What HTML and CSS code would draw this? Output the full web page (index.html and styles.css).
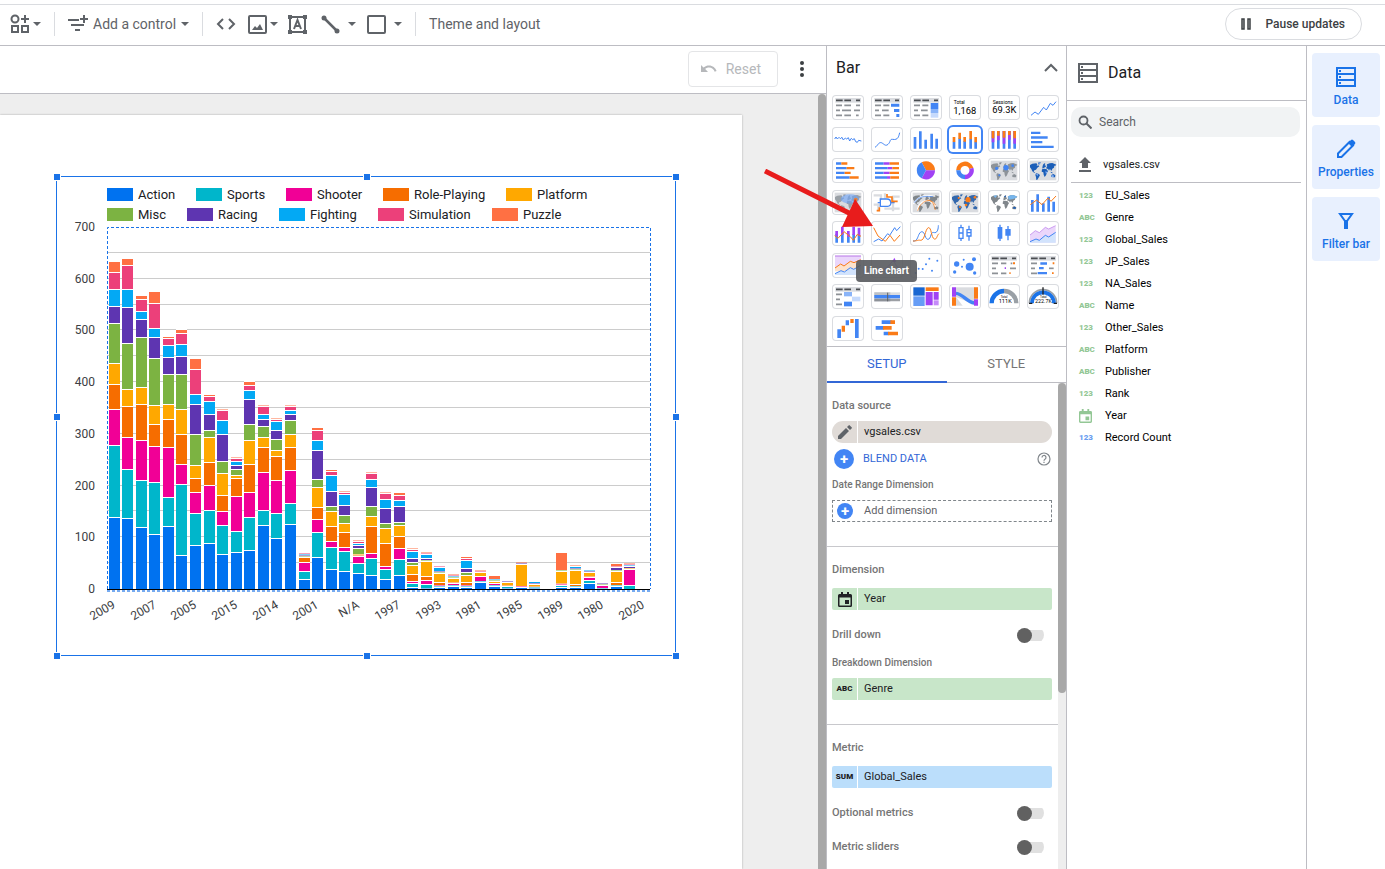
FILE: index.html
```html
<!DOCTYPE html>
<html lang="en">
<head>
	<meta charset="UTF-8">
	<title>Report editor</title>
	<link rel="stylesheet" href="styles.css">
</head>
<body>
<svg class="defs" width="0" height="0" aria-hidden="true">
	<symbol id="world" viewBox="0 0 96 75">
		<path d="M9 21l7-4 12-1 3 3-2 5 5-2 3 3-6 4-4 6-5 2-2 4 5 3-3 1-6-5-3-7-4-5zM33 14l8-2-2 6-4 2zM27 46l7 1 5 4-3 6-5 8-3 1-1-9-2-6z"/>
		<path d="M48 20l4-4 3 1-2 5 4 1-1 4-5 2-4 3-1-4zM45 34l7-2 7 2 4 6-3 4-3 8-4 5-3-7-1-7-5-2zM60 19l8-3 8-1 12 5-3 3-3 0-1 6-5 3-2 6-3-1-2-5-3 6-3-6-4 1-1-5 3-4-2-2zM70 41l5 2 3 3-5-1zM73 51l6-3 6 4-1 6-5 0-6-1z"/>
	</symbol>
	<symbol id="server" viewBox="0 0 20 20">
		<path fill="none" stroke="currentColor" stroke-width="2" d="M1 1h18v18H1zM1 7h18M1 13h18"/>
		<path fill="currentColor" d="M3 3h2v2H3zM3 9h2v2H3zM3 15h2v2H3z"/>
	</symbol>
	<symbol id="calendar" viewBox="0 0 14 15">
		<path fill="currentColor" d="M3 0h2v2h4V0h2v2h1.500a1.500 1.500 0 0 1 1.500 1.500v10A1.500 1.500 0 0 1 12.500 15h-11A1.500 1.500 0 0 1 0 13.500v-10A1.500 1.500 0 0 1 1.500 2H3zM1.500 5.500v8h11v-8zM7 8h4v4H7z" fill-rule="evenodd"/>
	</symbol>
	<symbol id="tbl" viewBox="0 0 96 75">
		<path fill="#dadce0" d="M10 9h77v14H10z"/>
		<path stroke="#4a4d51" stroke-width="5" d="M12 16h20M37 16h20M72 16h12"/>
		<path stroke="#8d9196" stroke-width="5" d="M12 31h18M12 46h12M12 61h18"/>
	</symbol>
</svg>

<div class="app">
	<header class="toolbar">
		<button class="tool" aria-label="Community visualizations"><svg width="20" height="20" viewBox="0 0 20 20"><g fill="none" stroke="currentColor" stroke-width="2"><circle cx="5" cy="5" r="3.500"/><path d="M15 1v8M11 5h8M2 12h6v6H2zM12 12h6v6h-6z"/></g></svg><i class="caret"></i></button>
		<span class="sep"></span>
		<button class="tool control"><svg width="20" height="18" viewBox="0 0 20 18"><path fill="none" stroke="currentColor" stroke-width="2" d="M0 5h11M3 10h13M7 15h5M16 0v8M12 4h8"/></svg><span>Add a control</span><i class="caret"></i></button>
		<span class="sep"></span>
		<button class="tool code" aria-label="Embed"><svg width="20" height="14" viewBox="0 0 20 14"><path fill="none" stroke="currentColor" stroke-width="2" d="M7 2L2 7l5 5M13 2l5 5-5 5"/></svg></button>
		<button class="tool image" aria-label="Image"><svg width="19" height="19" viewBox="0 0 19 19"><rect x="1" y="1" width="17" height="17" rx="1" fill="none" stroke="currentColor" stroke-width="2"/><path fill="currentColor" d="M4 15l3-4 2 2 3-4 3 6z"/></svg><i class="caret"></i></button>
		<button class="tool text" aria-label="Text"><svg width="19" height="19" viewBox="0 0 19 19"><path fill="none" stroke="currentColor" stroke-width="2" d="M2 2h15v15H2zM6 14l3.500-9L13 14M7 11h5"/><path fill="currentColor" d="M0 0h4v4H0zM15 0h4v4h-4zM0 15h4v4H0zM15 15h4v4h-4z"/></svg></button>
		<button class="tool line" aria-label="Line"><svg width="19" height="19" viewBox="0 0 19 19"><path stroke="currentColor" stroke-width="2.500" d="M3 3l13 13"/><circle cx="3" cy="3" r="2.500" fill="currentColor"/><circle cx="16" cy="16" r="2.500" fill="currentColor"/></svg><i class="caret"></i></button>
		<button class="tool shape" aria-label="Shape"><svg width="19" height="19" viewBox="0 0 19 19"><rect x="1" y="1" width="17" height="17" rx="1" fill="none" stroke="currentColor" stroke-width="2"/></svg><i class="caret"></i></button>
		<span class="sep"></span>
		<button class="tool theme">Theme and layout</button>
		<button class="pause"><svg width="10" height="12" viewBox="0 0 10 12"><path fill="#dadce0" stroke="currentColor" stroke-width="1.500" d="M1 1h2v10H1zM7 1h2v10H7z"/></svg>Pause updates</button>
	</header>

	<div class="main">
		<main class="report">
			<div class="reportBar">
				<button class="reset" disabled><svg width="16" height="8" viewBox="0 0 16 8"><path fill="currentColor" d="M0 0l2.500 2.500C4.200 1 6 .4 8 .4c3.600 0 6.500 2.300 7.600 5.600l-1.900.7C12.900 4.300 10.700 2.500 8 2.500c-1.500 0-2.800.5-3.800 1.500L7 7H0z"/></svg>Reset</button>
				<button class="more" aria-label="More options"><svg width="4" height="16" viewBox="0 0 4 16"><g fill="currentColor"><circle cx="2" cy="2" r="2"/><circle cx="2" cy="8" r="2"/><circle cx="2" cy="14" r="2"/></g></svg></button>
			</div>
			<div class="canvas">
				<div class="sheet">
					<svg id="chart" class="chart" width="630" height="490" viewBox="0 0 630 490" role="img" aria-label="Global sales by year and genre"></svg>
				</div>
				<div class="vbar"></div>
			</div>
		</main>

		<aside class="setup">
			<div class="chartHead">
				<h2>Bar</h2>
				<button aria-label="Collapse"><svg width="14" height="9" viewBox="0 0 14 9"><path fill="none" stroke="currentColor" stroke-width="2" d="M1 8l6-6 6 6"/></svg></button>
			</div>
			<div class="picker">
				<button><svg viewBox="0 0 96 75"><use href="#tbl"/><path class="gr" d="M37 31h20M30 46h27M37 61h20M72 31h12M66 46h18M72 61h8"/></svg></button>
				<button><svg viewBox="0 0 96 75"><use href="#tbl"/><path class="gr" d="M37 31h18M33 46h20M37 61h18"/><path class="b" d="M60 26h25v9H60zM69 42h16v9H69zM76 57h9v9h-9z"/></svg></button>
				<button><svg viewBox="0 0 96 75"><use href="#tbl"/><path class="gr" d="M37 31h18M33 46h20M37 61h18"/><path class="b" d="M62 24h23v18H62z"/><path fill="#8ab4f8" d="M62 42h23v12H62z"/><path fill="#c6dafc" d="M62 54h23v14H62z"/></svg></button>
				<button><svg viewBox="0 0 96 75"><text x="14" y="27" font-size="15">Total</text><text x="13" y="56" font-size="28">1,168</text></svg></button>
				<button><svg viewBox="0 0 96 75"><text x="14" y="26" font-size="15">Sessions</text><text x="13" y="53" font-size="28">69.3K</text></svg></button>
				<button><svg viewBox="0 0 96 75"><path class="lb" d="M12 61l12-10 10 7 16-21 8 8 12-20 8 6 9-11"/></svg></button>

				<button><svg viewBox="0 0 96 75"><path class="lb" d="M8 36l4-6 4 6 5-5 4 4 5-4 4 8 6-6 4 3 5-4 4 10 5-8 4 4 5-3 4 9 5 2 4-6 8 2"/></svg></button>
				<button><svg viewBox="0 0 96 75"><path class="lb" d="M12 61c8-4 10-16 19-14 9 4 12 12 20 5 9-8 4-16 14-15 16 3 18-8 21-20"/></svg></button>
				<button><svg viewBox="0 0 96 75"><path class="b" d="M11 30h8v35h-8zM27 13h8v52h-8zM43 38h8v27h-8zM61 20h8v45h-8zM76 35h8v30h-8z"/></svg></button>
				<button class="active"><svg viewBox="0 0 96 75"><path class="b" d="M11 44h8v21h-8zM28 34h8v31h-8zM43 42h8v23h-8zM61 35h8v30h-8zM76 44h8v21h-8z"/><path class="o" d="M11 30h8v15h-8zM28 17h8v19h-8zM43 30h8v14h-8zM61 12h8v25h-8zM76 30h8v16h-8z"/></svg></button>
				<button><svg viewBox="0 0 96 75"><path class="b" d="M11 12h8v53h-8zM27 12h8v53h-8zM44 12h8v53h-8zM60 12h8v53h-8zM76 12h8v53h-8z"/><path class="p" d="M11 12h8v34h-8zM27 12h8v28h-8zM44 12h8v38h-8zM60 12h8v26h-8zM76 12h8v38h-8z"/><path class="o" d="M11 12h8v22h-8zM27 12h8v14h-8zM44 12h8v20h-8zM60 12h8v12h-8zM76 12h8v22h-8z"/></svg></button>
				<button><svg viewBox="0 0 96 75"><path class="b" d="M12 14h28v7H12zM12 28h50v7H12zM12 42h34v7H12zM12 56h68v7H12z"/></svg></button>

				<button><svg viewBox="0 0 96 75"><path class="b" d="M12 13h16v7H12zM12 27h32v7H12zM12 41h26v7H12zM12 55h41v7H12z"/><path class="o" d="M28 13h18v7H28zM44 27h23v7H44zM38 41h18v7H38zM53 55h27v7H53z"/></svg></button>
				<button><svg viewBox="0 0 96 75"><path class="b" d="M12 13h26v7H12zM12 27h38v7H12zM12 41h26v7H12zM12 55h36v7H12z"/><path class="p" d="M38 13h18v7H38zM50 27h14v7H50zM38 41h18v7H38zM48 55h10v7H48z"/><path class="o" d="M56 13h28v7H56zM64 27h20v7H64zM56 41h28v7H56zM58 55h26v7H58z"/></svg></button>
				<button><svg viewBox="0 0 96 75"><path class="o" d="M48 37L35 13a27 27 0 0 1 40 24z"/><path class="p" d="M48 37h27a27 27 0 0 1-40 24z"/><path class="b" d="M48 37L35 61a27 27 0 0 1 0-48z"/></svg></button>
				<button><svg viewBox="0 0 96 75"><g fill="none" stroke-width="13"><path stroke="#fa7b17" d="M28 37a20 20 0 0 1 39-6"/><path stroke="#a142f4" d="M67 31a20 20 0 0 1-19 26"/><path stroke="#4285f4" d="M48 57a20 20 0 0 1-20-20"/></g></svg></button>
				<button><svg viewBox="0 0 96 75"><path class="bg" d="M8 8h80v59H8z"/><use href="#world" fill="#8d9399"/><g class="b"><circle cx="54" cy="29" r="8"/><circle cx="26" cy="31" r="5"/><circle cx="74" cy="23" r="4"/><circle cx="34" cy="52" r="3"/></g></svg></button>
				<button><svg viewBox="0 0 96 75"><path class="bg" d="M8 8h80v59H8z"/><use href="#world" fill="#1b5eb8"/><path fill="#8ab4f8" d="M34 16l6-3-2 5zM55 40l6 2-4 6zM74 52h6v5h-6zM27 48l7 1-3 5z"/></svg></button>

				<button><svg viewBox="0 0 96 75"><path class="bg" d="M8 8h80v59H8z"/><use href="#world" fill="#9aa0a6"/><ellipse cx="54" cy="27" rx="28" ry="14" fill="#6da3f8" opacity=".6"/><circle cx="71" cy="29" r="6" class="o" opacity=".8"/></svg></button>
				<button><svg viewBox="0 0 96 75"><path fill="none" stroke="#dadce0" stroke-width="7" d="M8 16h22v14M8 44h14v20M42 10v16M86 20H66v44M86 56H40"/><path fill="none" stroke="#4285f4" stroke-width="4" d="M28 27h20c14 0 16 22 2 22H28zM20 38h8M61 38h10"/><path fill="none" stroke="#fa7b17" stroke-width="5" d="M48 12v9h15v13h17M17 62h8V52"/></svg></button>
				<button><svg viewBox="0 0 96 75"><path class="bg" d="M8 8h80v59H8z"/><use href="#world" fill="#80868b"/><path fill="none" stroke="#fff" stroke-width="4" d="M10 42C30 12 50 16 76 18M22 62c4-30 36-42 56-12"/><path fill="none" stroke="#fa7b17" stroke-width="2" d="M23 62c10-30 38-42 54-16M52 30c20 2 20 20 24 30"/><path fill="none" stroke="#4285f4" stroke-width="2" d="M13 38c12-20 30-20 56-18"/></svg></button>
				<button><svg viewBox="0 0 96 75"><path class="bg" d="M8 8h80v59H8z"/><use href="#world" fill="#3368ad"/><g class="o"><circle cx="57" cy="29" r="8"/><circle cx="29" cy="24" r="3"/><circle cx="78" cy="22" r="4"/><circle cx="51" cy="45" r="4"/><circle cx="33" cy="51" r="3"/></g></svg></button>
				<button><svg viewBox="0 0 96 75"><use href="#world" fill="#80868b"/><path fill="#76b5ec" d="M60 19l8-3 8-1 12 5-3 3-9 4-14 2zM16 17l12-1-6 8z"/><path fill="#1b5eb8" d="M76 51h7v5h-7zM48 20l4-4 2 6z"/></svg></button>
				<button><svg viewBox="0 0 96 75"><path class="b" d="M12 30h8v35h-8zM28 13h8v52h-8zM45 40h8v25h-8zM61 20h8v45h-8zM76 35h8v30h-8z"/><path class="lo" d="M10 44l19-14 16 14 18-20 9 10 15-16"/></svg></button>

				<button><svg viewBox="0 0 96 75"><path class="b" d="M10 38h8v27h-8zM27 36h8v29h-8zM45 40h8v25h-8zM61 40h8v25h-8zM77 42h8v23h-8z"/><path class="p" d="M10 30h8v16h-8zM27 17h8v24h-8zM45 30h8v18h-8zM61 17h8v25h-8zM77 20h8v24h-8z"/><path class="lo" d="M8 44l10 8 18-20 20 16 8 10 12-18 11 6"/></svg></button>
				<button><svg viewBox="0 0 96 75"><path class="lb" d="M8 62l15-8 10 6 17-22 6 5 15-23 6 9 11-12"/><path class="lo" d="M8 20l13 25 22 16 14-18 13 18 17-19"/></svg></button>
				<button><svg viewBox="0 0 96 75"><path class="lb" d="M9 60c12 2 14-12 18-20 6-12 14-10 18 4 5 16 14 14 18-2 3-11 8-7 12-7 8-1 10-12 10-22"/><path class="lo" d="M9 60c14 0 14-4 22-2 14 2 14-34 24-38 10-2 8 30 18 34 8 2 7-10 14-16"/></svg></button>
				<button><svg viewBox="0 0 96 75"><path fill="none" stroke="#4285f4" stroke-width="4" d="M36 11v9M36 52v8M30 20h12v32H30zM30 36h12M60 14v10M60 44v15M54 26h12v19H54zM54 35h12"/></svg></button>
				<button><svg viewBox="0 0 96 75"><path class="b" d="M34 11h4v7h5v35h-5v7h-4v-7h-5V18h5zM58 15h4v9h6v20h-6v14h-4V44h-6V24h6z"/></svg></button>
				<button><svg viewBox="0 0 96 75"><path fill="#ead6fb" d="M9 42l16-13 12 6 18-16 10 5 21-10v51H9z"/><path fill="#d2e3fc" d="M9 62l18-8 10 4 18-15 10 5 21-14v31H9z"/><path fill="none" stroke="#b774e8" stroke-width="2" d="M9 42l16-13 12 6 18-16 10 5 21-10"/><path class="lb" d="M9 62l18-8 10 4 18-15 10 5 21-14"/></svg></button>

				<button><svg viewBox="0 0 96 75"><path fill="#ead6fb" d="M9 9h78v40H9z"/><path fill="#fde2cc" d="M9 45l17-12 10 6 19-14 11 4 20-9v35H9z"/><path fill="#d2e3fc" d="M9 62l18-9 10 4 18-13 10 5 21-12v29H9z"/><path fill="none" stroke="#b774e8" stroke-width="3" d="M9 9h78"/><path class="lo" d="M9 45l17-12 10 6 19-14 11 4 20-9"/><path class="lb" d="M9 62l18-9 10 4 18-13 10 5 21-12"/></svg></button>
				<button><svg viewBox="0 0 96 75"><path fill="#a142f4" d="M64 26l6-12 6 12z"/><path fill="none" stroke="#a142f4" stroke-width="2" d="M10 60l16-15 12 6 15-12 14-18 10 19 9 6"/></svg></button>
				<button><svg viewBox="0 0 96 75"><g class="b"><circle cx="26" cy="47" r="3"/><circle cx="38" cy="48" r="3"/><circle cx="48" cy="34" r="3"/><circle cx="58" cy="17" r="3"/><circle cx="66" cy="53" r="3"/><circle cx="82" cy="23" r="3"/><circle cx="17" cy="60" r="3"/></g></svg></button>
				<button><svg viewBox="0 0 96 75"><g class="b"><circle cx="23" cy="33" r="8"/><circle cx="62" cy="41" r="12"/><circle cx="75" cy="19" r="6"/><circle cx="39" cy="41" r="3"/><circle cx="17" cy="57" r="5"/><circle cx="77" cy="60" r="5"/><circle cx="44" cy="20" r="3"/></g></svg></button>
				<button><svg viewBox="0 0 96 75"><use href="#tbl"/><path class="gr" d="M39 31h16M39 61h16M68 31h5M66 46h18"/><path class="o" d="M75 28h6v6h-6zM64 58h4v5h-4z"/><path fill="#a142f4" d="M50 43h4v5h-4z"/></svg></button>
				<button><svg viewBox="0 0 96 75"><use href="#tbl"/><path class="b" d="M40 28h20v7H40zM36 42h14v7H36zM32 57h28v7H32z"/><path class="o" d="M77 28h5v6h-5zM75 58h5v5h-5z"/><path class="gr" d="M66 46h14"/></svg></button>

				<button><svg viewBox="0 0 96 75"><use href="#tbl"/><path fill="#8ab4f8" d="M36 24h24v13H36z"/><path fill="#c6dafc" d="M60 38h25v14H60z"/><path class="b" d="M36 53h24v14H36z"/></svg></button>
				<button><svg viewBox="0 0 96 75"><path fill="#dadce0" d="M10 25h77v28H10z"/><path fill="#bdc1c6" d="M10 25h48v28H10z"/><path class="b" d="M10 33h77v10H10z"/><path stroke="#5f6368" stroke-width="3" d="M10 48h77M50 26v26"/></svg></button>
				<button><svg viewBox="0 0 96 75"><path fill="#1967d2" d="M10 10h34v25H10z"/><path class="o" d="M47 10h39v11H47z"/><path fill="#669df6" d="M10 37h34v29H10z"/><path class="p" d="M47 24h21v40H47zM71 24h15v23H71z"/><path fill="#c58af9" d="M71 49h15v15H71z"/></svg></button>
				<button><svg viewBox="0 0 96 75"><path class="bg" d="M21 10h55v55H21z"/><path fill="#fff" d="M21 39l55 22v6H42z"/><path fill="none" stroke="#4285f4" stroke-width="10" d="M21 28c23 2 29 25 55 29"/><path class="p" d="M9 10h12v28H9zM75 46h12v19H75z"/><path class="o" d="M9 40h12v25H9zM75 10h12v34H75z"/></svg></button>
				<button><svg viewBox="0 0 96 75"><g fill="none" stroke-width="13"><path stroke="#1a73e8" d="M11 58a37 37 0 0 1 37-37"/><path stroke="#9aa0a6" d="M48 21a37 37 0 0 1 37 37"/></g><text x="38" y="42" font-size="9">Total</text><text x="32" y="58" font-size="17">111K</text></svg></button>
				<button><svg viewBox="0 0 96 75"><g fill="none"><path stroke="#9aa0a6" stroke-width="5" d="M7 58a41 41 0 0 1 82 0"/><path stroke="#1a73e8" stroke-width="11" d="M15 58a33 33 0 0 1 66 0"/><path stroke="#202124" stroke-width="4" d="M48 10v22M6 58h10M80 58h10"/></g><text x="39" y="43" font-size="9">Total</text><text x="24" y="58" font-size="16">222.7K</text></svg></button>

				<button><svg viewBox="0 0 96 75"><path class="b" d="M16 40h11v26H16zM41 13h10v15H41zM69 9h11v57H69z"/><path class="o" d="M29 29h10v18H29zM55 9h10v12H55z"/></svg></button>
				<button><svg viewBox="0 0 96 75"><path class="b" d="M32 13h30v11H32zM14 30h24v11H14zM38 47h15v11H38z"/><path class="o" d="M58 13h14v11H58zM36 30h26v11H36zM51 47h30v11H51z"/></svg></button>
			</div>
			<svg class="pointer" width="110" height="62" viewBox="0 0 110 62"><path stroke="#e81c1c" stroke-width="5" d="M1 2l88 44"/><path fill="#e81c1c" d="M109 57l-31 1 13-28z"/></svg>
			<div class="tip" role="tooltip">Line chart</div>

			<div class="tabs">
				<button class="active">SETUP</button>
				<button>STYLE</button>
			</div>
			<div class="props">
				<div class="sections">
					<section>
						<h3>Data source</h3>
						<button class="chip source"><span class="type"><svg width="14" height="14" viewBox="0 0 14 14"><path fill="#5f6368" d="M0 11v3h3l8-8-3-3zM9 2l3 3 1.600-1.600a.8.8 0 0 0 0-1.200L11.800.4a.8.8 0 0 0-1.200 0z"/></svg></span><span class="name">vgsales.csv</span></button>
						<div class="blend"><button class="add"><i class="plus">+</i>BLEND DATA</button><svg width="14" height="14" viewBox="0 0 14 14"><circle cx="7" cy="7" r="6" fill="none" stroke="#80868b" stroke-width="1.200"/><path fill="none" stroke="#80868b" stroke-width="1.200" d="M5 5.500a2 2 0 1 1 3 1.700q-1 .6-1 1.500M7 9.700v1.200"/></svg></div>
						<h4>Date Range Dimension</h4>
						<button class="drop"><i class="plus">+</i>Add dimension</button>
					</section>
					<section>
						<h3>Dimension</h3>
						<button class="chip dim"><span class="type"><svg width="14" height="15"><use href="#calendar"/></svg></span><span class="name">Year</span></button>
						<label class="toggle">Drill down<input type="checkbox"></label>
						<h4>Breakdown Dimension</h4>
						<button class="chip dim"><span class="type">ABC</span><span class="name">Genre</span></button>
					</section>
					<section>
						<h3>Metric</h3>
						<button class="chip metric"><span class="type">SUM</span><span class="name">Global_Sales</span></button>
						<label class="toggle">Optional metrics<input type="checkbox"></label>
						<label class="toggle">Metric sliders<input type="checkbox"></label>
					</section>
				</div>
				<div class="vbar track"><div class="thumb"></div></div>
			</div>
		</aside>

		<aside class="data">
			<div class="dataHead"><svg width="20" height="20"><use href="#server"/></svg><h2>Data</h2></div>
			<label class="search"><svg width="14" height="14" viewBox="0 0 14 14"><circle cx="5.500" cy="5.500" r="4" fill="none" stroke="currentColor" stroke-width="1.800"/><path stroke="currentColor" stroke-width="2" d="M8.500 8.500l5 5"/></svg><input type="text" placeholder="Search" aria-label="Search"></label>
			<div class="file"><svg width="12" height="15" viewBox="0 0 12 15"><path fill="#5f6368" d="M6 0l6 6H9v5H3V6H0zM0 13h12v2H0z"/></svg>vgsales.csv</div>
			<ul class="fields">
				<li><b>123</b>EU_Sales</li>
				<li><b>ABC</b>Genre</li>
				<li><b>123</b>Global_Sales</li>
				<li><b>123</b>JP_Sales</li>
				<li><b>123</b>NA_Sales</li>
				<li><b>ABC</b>Name</li>
				<li><b>123</b>Other_Sales</li>
				<li><b>ABC</b>Platform</li>
				<li><b>ABC</b>Publisher</li>
				<li><b>123</b>Rank</li>
				<li><b><svg width="13" height="14"><use href="#calendar"/></svg></b>Year</li>
				<li class="count"><b>123</b>Record Count</li>
			</ul>
		</aside>

		<nav class="rail">
			<button><svg width="20" height="20"><use href="#server"/></svg>Data</button>
			<button><svg width="20" height="20" viewBox="0 0 20 20"><path fill="none" stroke="currentColor" stroke-width="2" d="M2 18v-3.500L13.500 3l3.500 3.500L5.500 18z"/><path fill="currentColor" d="M12 4l3-3q1-.8 2 0l2 2q.8 1 0 2l-3 3z"/></svg>Properties</button>
			<button><svg width="20" height="20" viewBox="0 0 20 20"><path fill="none" stroke="currentColor" stroke-width="2" d="M4 3h12l-5 7H9z"/><path fill="currentColor" d="M8 9h4v9H8z"/></svg>Filter bar</button>
		</nav>
	</div>
</div>
<script src="chart.js"></script>
</body>
</html>
```
FILE: styles.css
```css
*{
	margin: 0;
	padding: 0;
	box-sizing: border-box;
	list-style: none;
}

body{
	font: 11px/16px Roboto, "Noto Sans", sans-serif;
	color: #202124;
	background: #fff;
}

button,
input{
	font: inherit;
	color: inherit;
	background: none;
	border: 0;
}

button{
	cursor: pointer;
}

svg{
	display: block;
	flex: none;
}

.defs{
	position: absolute;
}

.app{
	display: flex;
	flex-direction: column;
	min-height: 100vh;
	padding-top: 4px;
}

/* toolbar */
.toolbar{
	display: flex;
	align-items: center;
	height: 42px;
	padding: 0 23px 2px 10px;
	border-top: 1px solid #dadce0;
	border-bottom: 1px solid #bdbdc3;
	color: #5f6368;
}

.tool{
	display: flex;
	align-items: center;
	gap: 3px;
	font-size: 14px;
}

.caret{
	border: 4px solid transparent;
	border-top-color: #5f6368;
	border-bottom: 0;
}

.sep{
	width: 1px;
	height: 24px;
	margin: 0 13px;
	background: #dadce0;
}

.control{
	gap: 5px;
}

.image{
	margin-left: 12px;
}

.text{
	margin-left: 10px;
}

.line{
	gap: 8px;
	margin-left: 14px;
}

.shape{
	gap: 8px;
	margin-left: 11px;
}

.pause{
	display: flex;
	align-items: center;
	gap: 14px;
	height: 32px;
	margin-left: auto;
	padding: 0 16px 0 15px;
	border: 1px solid #dadce0;
	border-radius: 16px;
	font-size: 12px;
	font-weight: 500;
	color: #3c4043;
}

.main{
	display: flex;
	flex: 1;
}

/* report */
.report{
	display: flex;
	flex: 1;
	flex-direction: column;
	min-width: 0;
}

.reportBar{
	display: flex;
	align-items: center;
	justify-content: flex-end;
	gap: 14px;
	height: 48px;
	padding: 0 14px 2px 0;
	border-bottom: 1px solid #bdbdc3;
}

.reset{
	display: flex;
	align-items: center;
	gap: 9px;
	height: 36px;
	padding: 0 16px 0 12px;
	border: 1px solid #e4e5e7;
	border-radius: 4px;
	font-size: 14px;
	color: #b6b8bb;
}

.more{
	padding: 8px;
	color: #3c4043;
}

.canvas{
	display: flex;
	flex: 1;
	background: #eee;
}

.sheet{
	flex: 1;
	margin: 21px 76px 0 0;
	padding: 57px 0 0 52px;
	background: #fff;
	box-shadow: 0 0 2px rgba(0,0,0,.3);
}

.vbar{
	width: 8px;
	background: #a8a8a8;
	border-radius: 4px 4px 0 0;
}

/* chart */
.chart{
	font-size: 12px;
}

.chart text{
	fill: #3c4043;
}

.chart .legend text{
	font-size: 13px;
	fill: #202124;
}

.chart .grid{
	stroke: #ccc;
}

.chart .handle{
	fill: #1a73e8;
	stroke: #fff;
}

.chart .frame{
	fill: none;
	stroke: #1a73e8;
}

.chart .dash{
	stroke-dasharray: 3 2;
}

/* chart settings */
.setup{
	position: relative;
	display: flex;
	flex-direction: column;
	width: 240px;
	border-left: 1px solid #bdbdc3;
}

.chartHead{
	display: flex;
	align-items: center;
	justify-content: space-between;
	height: 49px;
	padding: 0 8px 6px 9px;
	color: #5f6368;
}

h2{
	font-size: 16px;
	font-weight: 400;
	color: #202124;
}

.picker{
	display: grid;
	grid-template-columns: repeat(6, 32px);
	align-content: space-between;
	gap: 0 7px;
	height: 246px;
	padding-left: 5px;
}

.picker button{
	height: 25px;
	border-radius: 4px;
	box-shadow: inset 0 0 0 1px #dadce0;
}

.picker button.active{
	box-shadow: 0 0 0 2px #4285f4;
}

.picker svg{
	width: 32px;
	height: 25px;
}

.picker .b{ fill: #4285f4; }
.picker .o{ fill: #fa7b17; }
.picker .p{ fill: #a142f4; }
.picker .bg{ fill: #dadce0; }

.picker .gr{
	stroke: #8d9196;
	stroke-width: 5px;
}

.picker .lb,
.picker .lo{
	fill: none;
	stroke: #4285f4;
	stroke-width: 3px;
}

.picker .lo{
	stroke: #fa7b17;
}

.pointer{
	position: absolute;
	top: 123px;
	left: -63px;
}

.tip{
	position: absolute;
	top: 214px;
	left: 29px;
	padding: 3px 8px;
	border-radius: 4px;
	font-size: 10px;
	font-weight: 700;
	color: #fff;
	background: rgba(88,90,94,.9);
}

.tabs{
	display: flex;
	height: 37px;
	margin-top: 5px;
	border-top: 1px solid #bdbdc3;
	border-bottom: 1px solid #bdbdc3;
}

.tabs button{
	flex: 1;
	margin-bottom: -1px;
	border-bottom: 2px solid transparent;
	font-size: 13px;
	color: #757575;
}

.tabs .active{
	border-color: #3367d6;
	color: #3367d6;
}

.props{
	display: flex;
	flex: 1;
}

.sections{
	flex: 1;
}

section{
	display: flex;
	flex-direction: column;
	padding: 15px 6px 24px 5px;
	border-bottom: 1px solid #c8c8cc;
}

section:last-child{
	padding-bottom: 0;
	border: 0;
}

h3,
h4{
	font-size: 11px;
	font-weight: 500;
	color: #757575;
}

h4{
	margin-top: 8px;
	font-size: 10px;
}

.chip{
	display: flex;
	height: 22px;
	margin-top: 10px;
	border-radius: 2px;
	overflow: hidden;
	line-height: 22px;
	text-align: left;
}

.chip .type{
	display: flex;
	align-items: center;
	justify-content: center;
	width: 26px;
	border-right: 1px solid #fff;
	font-size: 8px;
	font-weight: 900;
}

.chip .name{
	padding-left: 6px;
}

.source{
	margin-top: 7px;
	border-radius: 11px;
	background: #e0dbd7;
}

.dim{
	background: #c8e6c9;
}

h4 + .chip{
	margin-top: 7px;
}

.metric{
	background: #bbdefb;
}

.blend{
	display: flex;
	align-items: center;
	justify-content: space-between;
	height: 20px;
	margin-top: 6px;
	padding: 0 1px 0 2px;
}

.add,
.drop{
	display: flex;
	align-items: center;
	gap: 9px;
	color: #3367d6;
}

.plus{
	width: 20px;
	border-radius: 50%;
	font: 700 15px/20px Roboto, sans-serif;
	text-align: center;
	color: #fff;
	background: #4285f4;
}

.drop{
	height: 22px;
	gap: 11px;
	margin-top: 7px;
	padding-left: 4px;
	border: 1px dashed #80868b;
	color: #5f6368;
}

.drop .plus{
	width: 16px;
	line-height: 16px;
}

.toggle{
	display: flex;
	align-items: center;
	justify-content: space-between;
	height: 20px;
	margin-top: 15px;
	padding-right: 8px;
	font-weight: 500;
	color: #757575;
}

.toggle + .toggle{
	margin-top: 14px;
}

.toggle + h4{
	margin-top: 10px;
}

.toggle input{
	appearance: none;
	display: flex;
	align-items: center;
	width: 27px;
	height: 16px;
	background: linear-gradient(#e0e0e0, #e0e0e0) center / 100% 11px no-repeat;
	border-radius: 8px;
}

.toggle input::before{
	content: "";
	width: 15px;
	height: 15px;
	border-radius: 50%;
	background: #616161;
}

.toggle input:checked{
	justify-content: flex-end;
}

.track{
	background: #eee;
	border-radius: 0;
}

.thumb{
	height: 310px;
	border-radius: 4px;
	background: #a8a8a8;
}

/* data panel */
.data{
	width: 240px;
	border-left: 1px solid #bdbdc3;
}

.dataHead{
	display: flex;
	align-items: center;
	gap: 10px;
	height: 55px;
	padding-left: 11px;
	border-bottom: 1px solid #bdbdc3;
	color: #5f6368;
}

.search{
	display: flex;
	align-items: center;
	gap: 7px;
	height: 30px;
	margin: 6px 6px 0 4px;
	padding: 0 7px;
	border-radius: 10px;
	font-size: 12px;
	color: #5f6368;
	background: #f1f3f4;
}

.search input{
	width: 100%;
	outline: 0;
}

.search input::placeholder{
	color: #5f6368;
}

.file{
	display: flex;
	align-items: center;
	gap: 12px;
	height: 46px;
	margin: 0 5px 0 4px;
	padding: 10px 0 0 8px;
	border-bottom: 1px solid #bdbdc3;
}

.fields{
	padding-top: 2px;
}

.fields li{
	display: flex;
	align-items: center;
	height: 22px;
	padding-left: 12px;
	color: #000;
}

.fields b{
	width: 26px;
	font-size: 8px;
	font-weight: 900;
	color: #93c795;
}

.fields .count b{
	color: #6a9df0;
}

/* right rail */
.rail{
	display: flex;
	flex-direction: column;
	gap: 8px;
	width: 79px;
	padding: 7px 5px;
	border-left: 1px solid #bdbdc3;
}

.rail button{
	display: flex;
	flex-direction: column;
	align-items: center;
	gap: 5px;
	height: 64px;
	padding-top: 14px;
	border-radius: 4px;
	font-size: 12px;
	font-weight: 500;
	color: #1a73e8;
	background: #e8f0fe;
}
```
FILE: chart.js
```js
var genres = [
	{name:'Action', color:'#0072f0', x:0, y:0},
	{name:'Sports', color:'#00b6cb', x:89, y:0},
	{name:'Shooter', color:'#f10096', x:179, y:0},
	{name:'Role-Playing', color:'#f66d00', x:276, y:0},
	{name:'Platform', color:'#ffa800', x:399, y:0},
	{name:'Misc', color:'#7cb342', x:0, y:20},
	{name:'Racing', color:'#5e35b1', x:80, y:20},
	{name:'Fighting', color:'#03a9f4', x:172, y:20},
	{name:'Simulation', color:'#ec407a', x:271, y:20},
	{name:'Puzzle', color:'#ff7043', x:385, y:20}
];

// running totals per year, in genre order
var totals = [
	[139,279,349,397,437,514,547,580,613,634],
	[138,233,293,353,387,475,545,581,627,641],
	[119,211,289,358,391,488,523,538,560,569],
	[107,206,277,320,356,447,488,505,553,577],
	[121,177,275,329,358,415,449,471,485,490],
	[66,204,242,299,349,416,451,473,495,503],
	[86,146,188,215,240,299,357,378,425,446],
	[88,153,202,246,293,308,338,364,374,378],
	[68,124,151,182,225,248,299,326,346,348],
	[72,113,179,215,221,233,240,248,254,256],
	[76,140,188,242,289,320,367,385,395,403],
	[123,153,227,275,293,316,329,339,353,355],
	[99,146,211,258,268,291,308,324,329,331],
	[126,167,231,275,299,326,338,346,353,356],
	[20,35,53,61,62,64,66,68,69,70],
	[61,111,136,159,198,213,269,289,308,314],
	[39,82,92,121,150,161,190,221,229,233],
	[35,74,82,111,128,144,163,184,188,190],
	[30,51,63,66,68,80,86,89,92,94],
	[28,59,70,121,142,161,198,213,224,226],
	[20,39,44,89,118,128,157,174,185,188],
	[28,58,79,103,124,130,161,172,182,188],
	[4,12,15,29,46,52,60,74,77,80],
	[1,10,17,25,54,57,60,68,70,72],
	[3,5,8,14,31,32,34,42,44,45],
	[6,8,12,14,21,23,24,26,28,29],
	[4,6,8,14,27,33,41,56,59,63],
	[14,16,25,26,32,32,32,33,34,36],
	[5,8,11,12,15,17,18,19,20,28],
	[1,5,5,7,13,14,15,16,16,16],
	[3,4,5,6,49,49,50,50,50,53],
	[2,3,4,6,10,10,12,16,16,16],
	[0,0,0,0,0,0,0,0,0,0],
	[3,8,10,12,34,36,36,36,36,72],
	[3,5,6,10,37,39,41,44,45,47],
	[12,18,23,26,33,33,35,36,37,37],
	[0,1,7,7,8,10,11,12,12,12],
	[5,7,8,14,35,37,42,43,45,50],
	[0,7,38,39,40,41,45,47,48,50],
	[0,0,0,0,0,0,0,0,0,0]
];

// every third year gets a label
var labels = ['2009','2007','2005','2015','2014','2001','N/A','1997','1993','1981','1985','1989','1980','2020'];

var left = 55, base = 417, plotW = 543, plotH = 362, max = 700;
var step = plotW / totals.length;

function yOf(v){
	return Math.round(base - v / max * plotH);
}

function rect(x, y, w, h, rest){
	return '<rect x="' + x + '" y="' + y + '" width="' + w + '" height="' + h + '" ' + rest + '/>';
}

function drawChart(el){
	var html = rect(4.5, 4.5, 619, 479, 'class="frame"');

	html += '<g class="legend">';
	genres.forEach(function(g){
		html += rect(left + g.x, 16 + g.y, 26, 13, 'fill="' + g.color + '"');
		html += '<text x="' + (left + g.x + 31) + '" y="' + (27 + g.y) + '">' + g.name + '</text>';
	});
	html += '</g>';

	for(var v = 0; v <= max; v += 50){
		var y = yOf(v);
		if(v > 0 && v < max){
			html += '<path class="grid" d="M' + left + ' ' + (y - 0.5) + 'h' + plotW + '"/>';
		}
		if(v % 100 == 0){
			html += '<text x="43" y="' + (y + 4) + '" text-anchor="end">' + v + '</text>';
		}
	}

	totals.forEach(function(stack, i){
		var x = Math.round(56.5 + i * step);
		var w = Math.round(67.5 + i * step) - x;
		var below = base;
		stack.forEach(function(total, n){
			var top = yOf(total);
			var h = below - top;
			if(h > 1){
				html += rect(x, top, w, h, 'fill="#fff"');
				html += rect(x, top + 1, w, h - 1, 'fill="' + genres[n].color + '"');
			}else if(h == 1){
				html += rect(x, top, w, 1, 'fill="' + genres[n].color + '" opacity=".5"');
			}
			below = top;
		});
	});

	html += '<path stroke="#1a73e8" stroke-opacity=".6" stroke-width="2" stroke-dasharray="3 2" d="M' + left + ' ' + (base + 2) + 'h' + plotW + '"/>';
	html += '<path stroke="#000" d="M' + left + ' ' + (base + 0.5) + 'h' + plotW + '"/>';
	html += '<path class="frame dash" d="M55.5 417V55.5h543V417"/>';

	labels.forEach(function(text, i){
		var x = Math.round(left + step * (i * 3 + 0.5)) + 2;
		html += '<text text-anchor="end" transform="translate(' + x + ' 435) rotate(-30)">' + text + '</text>';
	});

	[5, 315, 624].forEach(function(x){
		[5, 245, 484].forEach(function(y){
			if(x != 315 || y != 245){
				html += rect(x - 3.5, y - 3.5, 7, 7, 'class="handle"');
			}
		});
	});
	el.innerHTML = html;
}

drawChart(document.getElementById('chart'));
```
